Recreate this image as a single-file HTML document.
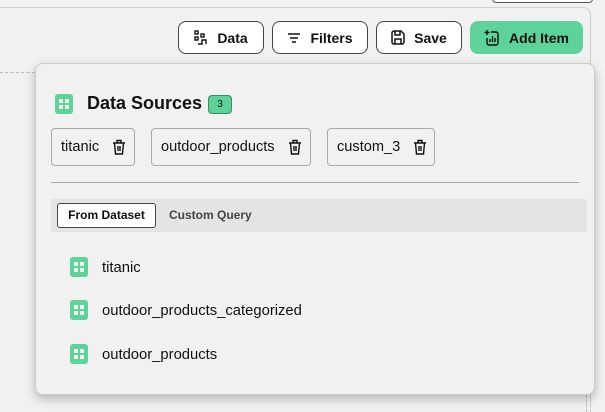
<!DOCTYPE html>
<html><head><style>
*{box-sizing:border-box;margin:0;padding:0}
html,body{width:605px;height:412px;overflow:hidden}
body{background:#f2f2f2;font-family:"Liberation Sans",sans-serif;position:relative;color:#111}
.abs{position:absolute}
.card{left:-10px;top:7px;width:601px;height:405px;border:1px solid #cfcfcf;border-bottom:none;border-radius:8px 8px 0 0;background:#f1f1f1}
.btn{position:absolute;top:21px;height:33px;border:1px solid #444;border-radius:8px;background:#fff;display:flex;align-items:center;justify-content:center;gap:9px;font-weight:bold;font-size:14px}
.green{background:#5dd39a;border-color:#5dd39a}
.pop{left:35px;top:63px;width:560px;height:332px;background:#f1f1f1;border:1px solid #ccc;border-radius:8px;box-shadow:0 4px 10px rgba(0,0,0,.25)}
.chip{position:absolute;top:128px;height:38px;border:1px solid #aaa;border-radius:4px;display:flex;align-items:center;padding-left:9px;gap:13px;font-size:14.6px;white-space:nowrap}
.chip svg,.btn svg{flex-shrink:0}
.gi{position:absolute;width:18px;height:20px;background:#5dd39a;border-radius:3px}
.gi:before{content:"";position:absolute;left:4px;top:5px;width:10px;height:10px;background:
linear-gradient(#f1f1f1,#f1f1f1) 0 0/4px 4px no-repeat,linear-gradient(#f1f1f1,#f1f1f1) 6px 0/4px 4px no-repeat,linear-gradient(#f1f1f1,#f1f1f1) 0 6px/4px 4px no-repeat,linear-gradient(#f1f1f1,#f1f1f1) 6px 6px/4px 4px no-repeat}
.item{position:absolute;left:102px;font-size:14.8px;white-space:nowrap}
</style></head><body>
<div class="abs" style="left:492px;top:-8px;width:101px;height:11px;border:1px solid #555;border-radius:4px;background:#fff"></div>
<div class="abs card"></div>
<div class="abs" style="left:0;top:72px;width:40px;border-top:1px dashed #bbb"></div>
<div class="abs" style="left:586px;top:395px;height:17px;border-left:1px dashed #bbb"></div>

<div class="btn" style="left:178px;width:86px"><svg width="14" height="16" viewBox="0 0 14 16" fill="none" stroke="#111" stroke-width="1.4"><rect x="1" y="1" width="3" height="3"/><rect x="1" y="7" width="3" height="3"/><rect x="7" y="4" width="3" height="3"/><path d="M4 14h4v-4h4v4"/></svg>Data</div>
<div class="btn" style="left:272px;width:96px"><svg width="14" height="12" viewBox="0 0 14 12" stroke="#111" stroke-width="1.5"><path d="M1 2h12M3 6h8M5 10h4"/></svg>Filters</div>
<div class="btn" style="left:376px;width:86px"><svg width="14" height="15" viewBox="0 0 14 15" fill="none" stroke="#111" stroke-width="1.5"><path d="M1 3a2 2 0 0 1 2-2h7l3 3v8a2 2 0 0 1-2 2H3a2 2 0 0 1-2-2z"/><path d="M4 1v4h5V1M4 14V9h6v5"/></svg>Save</div>
<div class="btn green" style="left:470px;width:113px"><svg width="16" height="17" viewBox="0 0 16 17" fill="none" stroke="#111" stroke-width="1.4"><path d="M3 1v5M0.5 3.5h5M7 3h5a2 2 0 0 1 2 2v9a2 2 0 0 1-2 2H5a2 2 0 0 1-2-2V9M6 13V10M8.5 13V7M11 13V9"/></svg>Add Item</div>

<div class="abs pop"></div>
<div class="gi" style="left:55px;top:94px"></div>
<div class="abs" style="left:87px;top:93px;font-size:18px;font-weight:bold">Data Sources</div>
<div class="abs" style="left:208px;top:95px;width:24px;height:19px;background:#5dd39a;border:1px solid #3a8f66;border-radius:4px;font-size:10px;text-align:center;line-height:17px">3</div>

<div class="chip" style="left:51px;width:84px">titanic<svg width="14" height="16" viewBox="0 0 14 16" fill="none" stroke="#111" stroke-width="1.4"><path d="M1 4h12M5 4V1.5h4V4M2.5 4l1 11h7l1-11M6 7v5M8 7v5"/></svg></div>
<div class="chip" style="left:151px;width:160px">outdoor_products<svg width="14" height="16" viewBox="0 0 14 16" fill="none" stroke="#111" stroke-width="1.4"><path d="M1 4h12M5 4V1.5h4V4M2.5 4l1 11h7l1-11M6 7v5M8 7v5"/></svg></div>
<div class="chip" style="left:327px;width:108px">custom_3<svg width="14" height="16" viewBox="0 0 14 16" fill="none" stroke="#111" stroke-width="1.4"><path d="M1 4h12M5 4V1.5h4V4M2.5 4l1 11h7l1-11M6 7v5M8 7v5"/></svg></div>

<div class="abs" style="left:51px;top:182px;width:528px;border-top:1px solid #aaa"></div>
<div class="abs" style="left:51px;top:199px;width:536px;height:33px;background:#e4e4e4;border-radius:2px"></div>
<div class="abs" style="left:57px;top:203px;width:99px;height:25px;background:#fff;border:1px solid #444;border-radius:3px;font-size:12px;font-weight:bold;text-align:center;line-height:23px">From Dataset</div>
<div class="abs" style="left:169px;top:208px;font-size:12px;font-weight:bold;color:#444">Custom Query</div>

<div class="gi" style="left:70px;top:257px"></div><div class="item" style="top:260px">titanic</div>
<div class="gi" style="left:70px;top:300px"></div><div class="item" style="top:303px">outdoor_products_categorized</div>
<div class="gi" style="left:70px;top:344px"></div><div class="item" style="top:347px">outdoor_products</div>
</body></html>
